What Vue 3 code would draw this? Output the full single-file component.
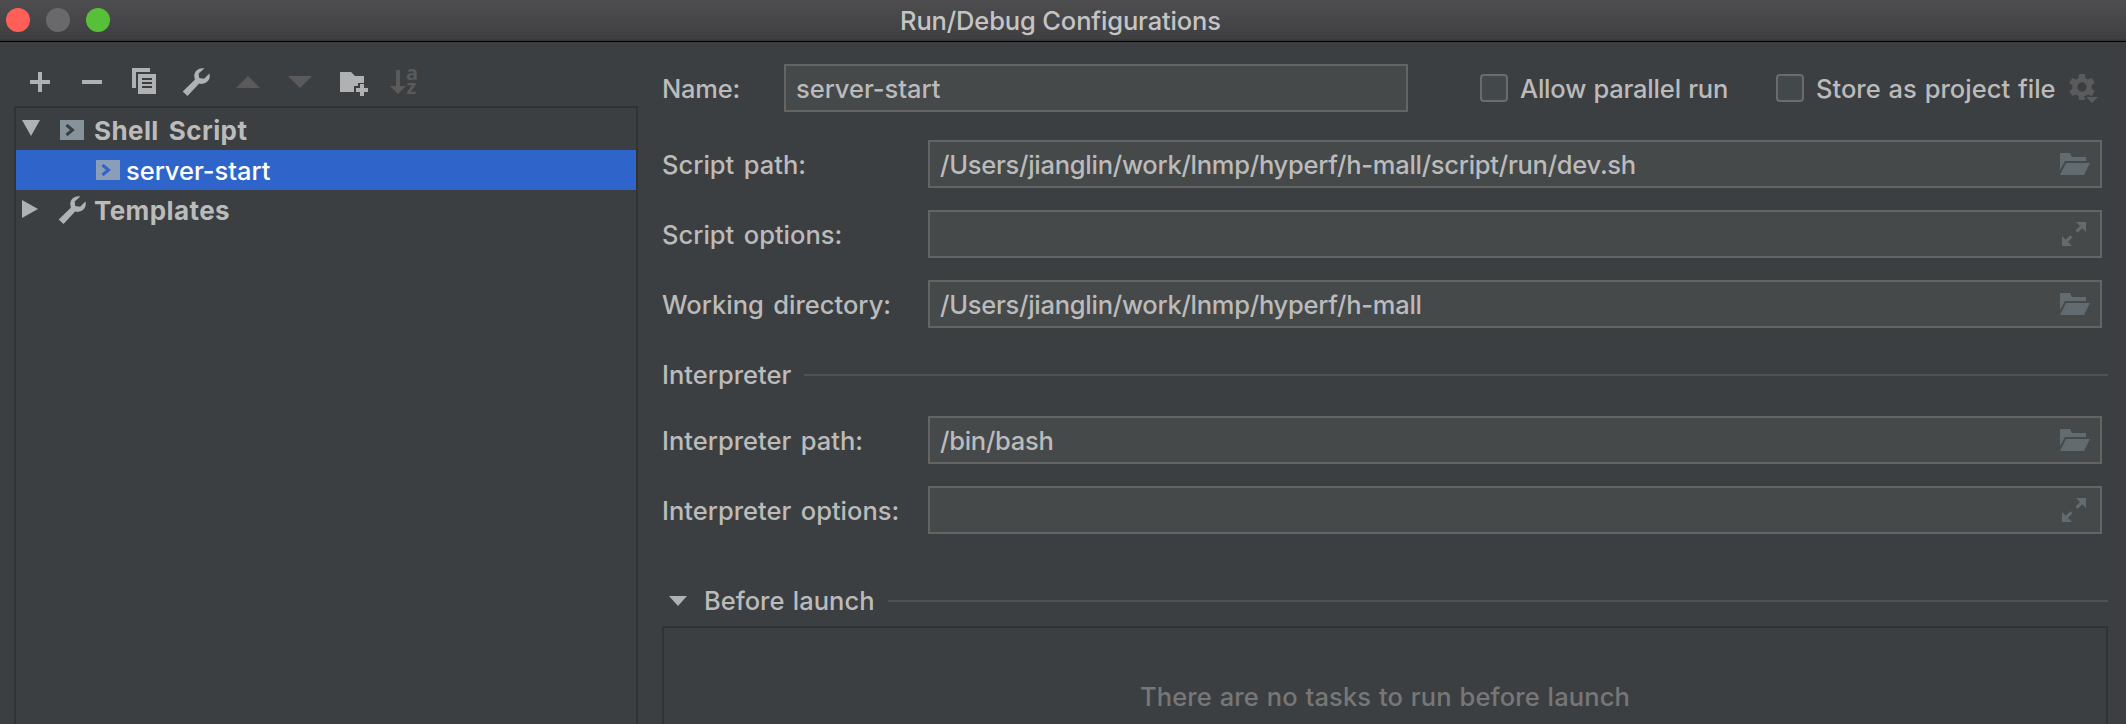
<script setup>
const fields = [
  { label: 'Script path:', value: '/Users/jianglin/work/lnmp/hyperf/h-mall/script/run/dev.sh', icon: 'folder', key: 'script-path' },
  { label: 'Script options:', value: '', icon: 'expand', key: 'script-options' },
  { label: 'Working directory:', value: '/Users/jianglin/work/lnmp/hyperf/h-mall', icon: 'folder', key: 'working-dir' }
]
const interpreterFields = [
  { label: 'Interpreter path:', value: '/bin/bash', icon: 'folder', key: 'interpreter-path' },
  { label: 'Interpreter options:', value: '', icon: 'expand', key: 'interpreter-options' }
]
const groups = [
  { id: 'script', rows: fields },
  { id: 'interpreter', title: 'Interpreter', rows: interpreterFields }
]
</script>

<template>
  <div class="window">
    <header class="titlebar">
      <div class="lights"><i class="red"></i><i class="gray"></i><i class="green"></i></div>
      <span class="title t">Run/Debug Configurations</span>
    </header>
    <div class="body">
      <aside class="side">
        <div class="toolbar">
          <svg width="440" height="64" viewBox="0 42 440 64" fill="#afb1b3">
            <path d="M38 72h4v8h8v4h-8v8h-4v-8h-8v-4h8z" />
            <path d="M82 80h20v4H82z" />
            <path d="M132 68h18v4h-14v16h-4z" />
            <path fill-rule="evenodd" d="M138 74h18v20h-18zM142 78v2h10v-2zM142 82v2h10v-2zM142 86v2h10v-2z" />
            <g transform="translate(182 68)">
              <path d="M27.400 5.600L22.100 10.800L17.200 9.900L16.700 5.600L22.300 0.500C17.600-.8 12.800 2.400 12.200 7.400L12.800 11.700L.7 23.400L5.500 28L17.200 15.600C23.500 17.200 29.400 12.200 27.400 5.600z" />
            </g>
            <path fill="#5a5a5a" d="M236 88L248 76L260 88zM288 76h24L300 88z" />
            <path d="M340 72h11l4 4h9v7h-6v3h-4v6h-14z" />
            <path d="M360 84h4v4h4v4h-4v4h-4v-4h-4v-4h4z" />
            <g fill="#5a5a5a">
              <path d="M396 70h4v16h6L398 94L390 86h6z" />
              <text class="sort"><tspan x="406" y="80">a</tspan><tspan x="406.500" y="94">z</tspan></text>
            </g>
          </svg>
        </div>
        <div class="tree">
          <div class="row">
            <svg width="78" height="40" viewBox="16 110 78 40">
              <path fill="#afb1b3" d="M22 120h18l-9 16z" />
              <path fill="#87939a" d="M60 120h24v20H60z" />
              <path fill="none" stroke="#3c3f41" stroke-width="3" d="M66.500 125l6 5l-6 5" />
            </svg>
            <b class="t">Shell Script</b>
          </div>
          <div class="row selected">
            <svg width="110" height="40" viewBox="16 150 110 40">
              <path fill="#8a9db9" d="M96 160h24v20H96z" />
              <path fill="none" stroke="#2f65ca" stroke-width="3" d="M102.500 165l6 5l-6 5" />
            </svg>
            <span class="t config">server-start</span>
          </div>
          <div class="row">
            <svg width="78" height="40" viewBox="16 190 78 40" fill="#afb1b3">
              <path d="M22 200v18l16-9z" />
              <g transform="translate(58 196)">
                <path d="M27.400 5.600L22.100 10.800L17.200 9.900L16.700 5.600L22.300 0.500C17.600-.8 12.800 2.400 12.200 7.400L12.800 11.700L.7 23.400L5.500 28L17.200 15.600C23.500 17.200 29.400 12.200 27.400 5.600z" />
              </g>
            </svg>
            <b class="t">Templates</b>
          </div>
        </div>
      </aside>

      <main class="main">
        <div class="namerow">
          <span class="t namelabel">Name:</span>
          <div class="input nameinput"><span class="t config">server-start</span></div>
          <i class="check"></i>
          <span class="t allow">Allow parallel run</span>
          <i class="check"></i>
          <span class="t store">Store as project file</span>
          <svg class="gear" width="30" height="32" viewBox="2068 73 30 32" fill="#5a5b5c">
            <g transform="translate(2082 88)">
              <circle r="7.200" fill="none" stroke="#5a5b5c" stroke-width="5" />
              <path v-for="a in [0, 60, 120]" :key="a" :transform="`rotate(${a})`" d="M-2.900-13h5.800l.8 6h-7.400zM-2.900 13h5.800l.8-6h-7.400z" />
            </g>
            <path stroke="#3c3f41" stroke-width="2" paint-order="stroke" d="M2086 98h12l-6 6z" />
          </svg>
        </div>

        <section v-for="g in groups" :key="g.id" class="group" :class="g.id">
          <div v-if="g.title" class="separator"><span class="t">{{ g.title }}</span><hr /></div>
          <div v-for="f in g.rows" :key="f.key" class="field">
            <span class="t label">{{ f.label }}</span>
            <div class="input">
              <span class="t value">{{ f.value }}</span>
              <svg v-if="f.icon === 'folder'" width="30" height="22" viewBox="0 0 30 22" fill="#626b70">
                <path d="M0 0h10l2 4h14v4H5L0 17z" />
                <path d="M6 10h24l-6 12H0z" />
              </svg>
              <svg v-else class="expand" width="24" height="24" viewBox="0 0 24 24" fill="#626b70">
                <path d="M14 0h10v10l-3.700-3.700-4.800 4.500-2-2 4.500-4.800z" />
                <path d="M10 24H0V14l3.700 3.700 4.800-4.500 2 2-4.500 4.800z" />
              </svg>
            </div>
          </div>
        </section>

        <div class="separator launch">
          <svg width="18" height="10" viewBox="0 0 18 10"><path fill="#afb1b3" d="M0 0h18L9 10z" /></svg>
          <span class="t">Before launch</span><hr />
        </div>
        <div class="tasks"><span class="t">There are no tasks to run before launch</span></div>
      </main>
    </div>
  </div>
</template>

<style>
body { margin: 0; background: #3c3f41; }
</style>

<style scoped>
.window {
  width: 2126px;
  height: 724px;
  overflow: hidden;
  box-sizing: border-box;
  background: #3c3f41;
  color: #bbb;
  font: 450 25.5px/30px Inter, "Liberation Sans", sans-serif;
  display: flex;
  flex-direction: column;
}
.t { white-space: pre; display: block; }
.titlebar {
  height: 42px;
  flex: none;
  box-sizing: border-box;
  display: grid;
  grid-template-columns: 900px 1fr;
  border-bottom: 1px solid #000;
  background: linear-gradient(#4e4e50, #3f3f41 39px, #333436 40px);
}
.lights { display: flex; gap: 16px; padding: 8px 0 0 6px; }
.lights i { width: 24px; height: 24px; border-radius: 50%; }
.red { background: #ff5f57; }
.gray { background: #69696b; }
.green { background: #58c038; }
.title { padding-top: 6px; color: #c4c4c5; letter-spacing: -.14px; }
.body { flex: 1; min-height: 0; display: flex; gap: 24px; }
.side { width: 638px; display: flex; flex-direction: column; }
.toolbar { height: 64px; flex: none; }
.toolbar svg { display: block; }
.sort { font: bold 20px "Open Sans", "Noto Sans", sans-serif; }
.tree { flex: 1; margin-left: 14px; border: 2px solid #323232; border-bottom: 0; padding-top: 2px; }
.row { display: flex; height: 40px; align-items: center; }
.row svg { flex: none; }
.row .t { padding-top: 1px; }
.row b { font-size: 26px; font-weight: 700; letter-spacing: .4px; word-spacing: 3.5px; }
.config { letter-spacing: -.04px; }
.selected { background: #2f65ca; color: #fff; }
.main { width: 1446px; display: flex; flex-direction: column; }
.namerow { height: 48px; margin-top: 22px; display: flex; align-items: center; }
.namerow .t, .field .t { padding-top: 2px; }
.namelabel { width: 122px; letter-spacing: -.25px; }
.input {
  box-sizing: border-box;
  flex: none;
  width: 1174px;
  height: 48px;
  display: flex;
  align-items: center;
  justify-content: space-between;
  padding: 0 10px;
  border: 2px solid #646464;
  background: #45494a;
}
.value { letter-spacing: -.265px; }
.nameinput { width: 624px; }
.check {
  box-sizing: border-box;
  width: 28px;
  height: 28px;
  margin-left: 72px;
  border: 2px solid #6b6b6b;
  border-radius: 4px;
  background: #43494a;
}
.check + .t { margin-left: 12px; }
.allow { width: 208px; letter-spacing: -.19px; word-spacing: .7px; }
.check + .store { width: 240px; letter-spacing: .02px; word-spacing: 1px; }
.allow + .check { margin-left: 48px; }
.gear { margin-left: 12px; }
.group { display: flex; flex-direction: column; gap: 22px; margin-top: 28px; }
.group.interpreter { margin-top: 32px; }
.field { display: flex; align-items: center; }
.label { width: 266px; }
.label, .separator .t { letter-spacing: 0; word-spacing: 2.7px; }
.launch.separator .t { word-spacing: 1.6px; }
.expand { margin-right: 4px; }
.separator { display: flex; align-items: center; height: 30px; }
.group .separator { margin-bottom: 4px; }
.separator hr { flex: 1; height: 2px; margin: 0 0 0 13px; border: 0; background: #515151; }
.launch { margin-top: 52px; padding-left: 7px; }
.launch svg { margin-right: 17px; }
.tasks {
  flex: 1;
  margin-top: 10px;
  border: 2px solid #323232;
  border-bottom: 0;
  padding: 54px 0 0;
  display: flex;
  justify-content: center;
  color: #777;
}
.tasks .t { letter-spacing: .12px; word-spacing: .9px; }
</style>
